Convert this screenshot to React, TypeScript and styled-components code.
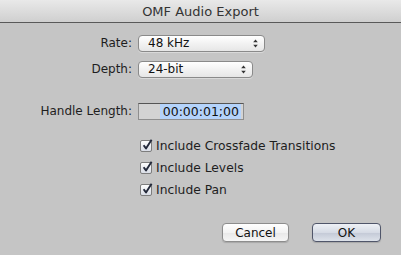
import React from 'react';
import styled, { createGlobalStyle, css } from 'styled-components';

const GlobalStyle = createGlobalStyle`
    html, body {
        margin: 0;
        padding: 0;
        width: 401px;
        height: 255px;
        overflow: hidden;
        background: #c5c5c5;
    }
`;

const font = css`
    font-family: 'DejaVu Sans', 'Liberation Sans', sans-serif;
    font-size: 12px;
    color: #1e1e1e;
`;

const Arrows: React.FC = () => (
    <svg width="5" height="9" viewBox="0 0 5 9">
        <path d="M2.5 0.5 L4.8 3.2 L0.2 3.2 Z" fill="#333" />
        <path d="M2.5 8.5 L4.8 5.8 L0.2 5.8 Z" fill="#333" />
    </svg>
);

const Check: React.FC = () => (
    <svg width="12" height="12" viewBox="0 0 12 12">
        <path d="M2.6 6.2 L5 9.4 L10.6 0.8" fill="none" stroke="#23293a" strokeWidth="1.9" strokeLinejoin="round" />
    </svg>
);

const Field: React.FC<{ label: string; value: string; width: number }> = ({ label, value, width }) => (
    <>
        <Label>{label}</Label>
        <Popup $width={width}>
            <span>{value}</span>
            <Arrows />
        </Popup>
    </>
);

const CheckRow: React.FC<{ text: string }> = ({ text }) => (
    <Option>
        <Box>
            <Check />
        </Box>
        {text}
    </Option>
);

export default function App() {
    return (
        <Window>
            <GlobalStyle />
            <TitleBar>OMF Audio Export</TitleBar>
            <Body>
                <Form>
                    <Field label="Rate:" value="48 kHz" width={127} />
                    <Field label="Depth:" value="24-bit" width={115} />
                    <Label $top={16}>Handle Length:</Label>
                    <TimeField $top={16}>
                        <Selected>00:00:01;00</Selected>
                    </TimeField>
                </Form>
                <Options>
                    <CheckRow text="Include Crossfade Transitions" />
                    <CheckRow text="Include Levels" />
                    <CheckRow text="Include Pan" />
                </Options>
                <Buttons>
                    <Button>Cancel</Button>
                    <Button $primary>OK</Button>
                </Buttons>
            </Body>
        </Window>
    );
}

const Window = styled.div`
    ${font}
    width: 401px;
    height: 255px;
    display: flex;
    flex-direction: column;
    background: #c5c5c5;
`;

const TitleBar = styled.div`
    height: 23px;
    flex-shrink: 0;
    box-sizing: border-box;
    display: flex;
    align-items: center;
    justify-content: center;
    padding-top: 1px;
    background: linear-gradient(#e9e9e9, #cfcfcf);
    border-bottom: 1px solid #595959;
    font-size: 13px;
    color: #333;
`;

const Body = styled.div`
    display: flex;
    flex-direction: column;
    padding-top: 12px;
`;

const Form = styled.div`
    display: grid;
    grid-template-columns: 132px auto;
    column-gap: 6px;
    row-gap: 9px;
    align-items: center;
`;

const Label = styled.div<{ $top?: number }>`
    text-align: right;
    margin-top: ${p => p.$top ?? 0}px;
    line-height: 17px;
`;

const Popup = styled.div<{ $width: number }>`
    width: ${p => p.$width}px;
    height: 17px;
    box-sizing: border-box;
    display: flex;
    align-items: center;
    justify-content: space-between;
    padding: 0 6px 0 9px;
    border: 1px solid #8a8a8a;
    border-radius: 4px;
    background: linear-gradient(#ffffff, #f1f1f1 55%, #e6e6e6);
    box-shadow: 0 1px 0 rgba(255, 255, 255, 0.35);
    line-height: 15px;
    color: #111;
`;

const TimeField = styled.div<{ $top?: number }>`
    margin-top: ${p => p.$top ?? 0}px;
    width: 106px;
    height: 17px;
    box-sizing: border-box;
    display: flex;
    justify-content: flex-end;
    background: #d3d3d3;
    border: 1px solid #8e8e8e;
    border-top-color: #555;
    padding: 0 2px 0 0;
`;

const Selected = styled.span`
    background: #b4d3fb;
    color: #111;
    line-height: 15px;
    padding: 0 2px 0 3px;
    font-size: 12.5px;
`;

const Options = styled.div`
    display: flex;
    flex-direction: column;
    gap: 8px;
    padding-left: 140px;
    margin-top: 19px;
`;

const Option = styled.div`
    display: flex;
    align-items: center;
    gap: 4px;
    height: 14px;
    line-height: 14px;
    font-size: 12.3px;
`;

const Box = styled.div`
    width: 12px;
    height: 12px;
    box-sizing: border-box;
    border: 1px solid #7d7d7d;
    border-radius: 2px;
    background: linear-gradient(#fdfdfd, #d9dde6);
    display: flex;
    align-items: center;
    justify-content: center;
    svg {
        margin-top: -2px;
        margin-left: 2px;
        flex-shrink: 0;
    }
`;

const Buttons = styled.div`
    display: flex;
    justify-content: flex-end;
    gap: 23px;
    padding-right: 20px;
    margin-top: 26px;
`;

const Button = styled.div<{ $primary?: boolean }>`
    width: ${p => (p.$primary ? 69 : 67)}px;
    height: 19px;
    box-sizing: border-box;
    display: flex;
    align-items: center;
    justify-content: center;
    border-radius: 4px;
    border: 1px solid ${p => (p.$primary ? '#50566a' : '#8d8d8d')};
    background: ${p =>
        p.$primary
            ? 'linear-gradient(#eef1f6, #d6dbe5 50%, #c3c9d6 51%, #dde2ea)'
            : 'linear-gradient(#ffffff, #f3f3f3 50%, #e8e8e8 51%, #f6f6f6)'};
    box-shadow: 0 1px 1px rgba(0, 0, 0, 0.15);
    color: #111;
`;
